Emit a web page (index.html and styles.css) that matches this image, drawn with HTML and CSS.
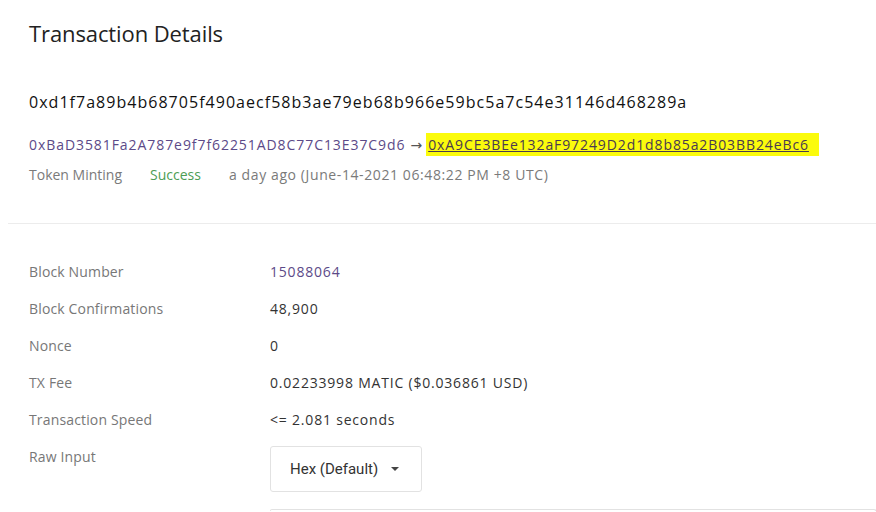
FILE: index.html
```html
<!DOCTYPE html>
<html>
<head>
<meta charset="utf-8">
<link rel="stylesheet" href="styles.css">
</head>
<body>
<div class="page">
  <section class="head">
    <h1 class="title">Transaction Details</h1>
    <div class="hash">0xd1f7a89b4b68705f490aecf58b3ae79eb68b966e59bc5a7c54e31146d468289a</div>
    <div class="addrs"><span class="from">0xBaD3581Fa2A787e9f7f62251AD8C77C13E37C9d6</span><span class="arrow">→</span><span class="to">0xA9CE3BEe132aF97249D2d1d8b85a2B03BB24eBc6</span></div>
    <div class="meta"><span class="type">Token Minting</span><span class="status">Success</span><span class="time">a day ago (June-14-2021 06:48:22 PM +8 UTC)</span></div>
  </section>
  <section class="details">
    <div class="row"><div class="label">Block Number</div><div class="value link">15088064</div></div>
    <div class="row"><div class="label">Block Confirmations</div><div class="value">48,900</div></div>
    <div class="row"><div class="label">Nonce</div><div class="value">0</div></div>
    <div class="row"><div class="label">TX Fee</div><div class="value">0.02233998 MATIC ($0.036861 USD)</div></div>
    <div class="row"><div class="label">Transaction Speed</div><div class="value">&lt;= 2.081 seconds</div></div>
    <div class="row raw"><div class="label">Raw Input</div>
      <div class="value">
        <button class="drop">Hex (Default) <span class="caret"></span></button>
        <div class="rawbox"></div>
      </div>
    </div>
  </section>
</div>
</body>
</html>
```
FILE: styles.css
```css
html, body { margin: 0; padding: 0; background: #fff; }
body { font-family: "Open Sans", "Noto Sans", sans-serif; color: #333; overflow: hidden; height: 512px; }
.page { padding: 0 0 0 8px; height: 512px; overflow: hidden; box-sizing: border-box; }
.head { padding: 18px 0 0 21px; border-bottom: 1px solid #ececec; height: 224px; box-sizing: border-box; }
.title { margin: 0; font-weight: 400; font-size: 22px; line-height: 30px; color: #222; letter-spacing: -0.1px; }
.hash { margin-top: 43px; font-size: 16px; line-height: 22px; color: #111; letter-spacing: 1.03px; }
.addrs { margin-top: 20px; font-size: 14px; line-height: 22px; color: #5c4a88; display: flex; align-items: center; }
.from { letter-spacing: 0.93px; }
.arrow { color: #555; font-family: "DejaVu Sans", sans-serif; font-size: 14px; margin: 0 4px 0 5px; }
.to { background: #fbfb0c; text-decoration: underline; padding: 1px 10px 0 2px; line-height: 22px; color: #4a3a50; letter-spacing: 0.9px; }
.meta { margin-top: 8px; font-size: 14px; line-height: 22px; color: #7a7a7a; display: flex; }
.type { width: 121px; }
.status { width: 79px; color: #4d9d55; }
.time { letter-spacing: 0.6px; }
.details { padding: 37px 0 0 21px; }
.row { display: flex; height: 37px; align-items: flex-start; font-size: 14px; line-height: 22px; }
.label { width: 241px; color: #777; letter-spacing: 0.15px; }
.value { color: #333; letter-spacing: 0.8px; }
.value.link { color: #5c4a88; }
.raw .value { flex: 1; padding-top: 1px; letter-spacing: 0; }
.drop { margin-top: -1px; height: 46px; width: 152px; border: 1px solid #e2e2e2; border-radius: 3px; background: #fff; font-family: Roboto, sans-serif; font-size: 15px; color: #333; text-align: left; padding: 0 0 0 19px; box-sizing: border-box; }
.caret { display: inline-block; margin-left: 9px; vertical-align: 3px; border-left: 4px solid transparent; border-right: 4px solid transparent; border-top: 4px solid #444; }
.rawbox { margin-top: 17px; height: 1px; border: 1px solid #e2e2e2; border-bottom: 0; border-radius: 3px 3px 0 0; }
```
